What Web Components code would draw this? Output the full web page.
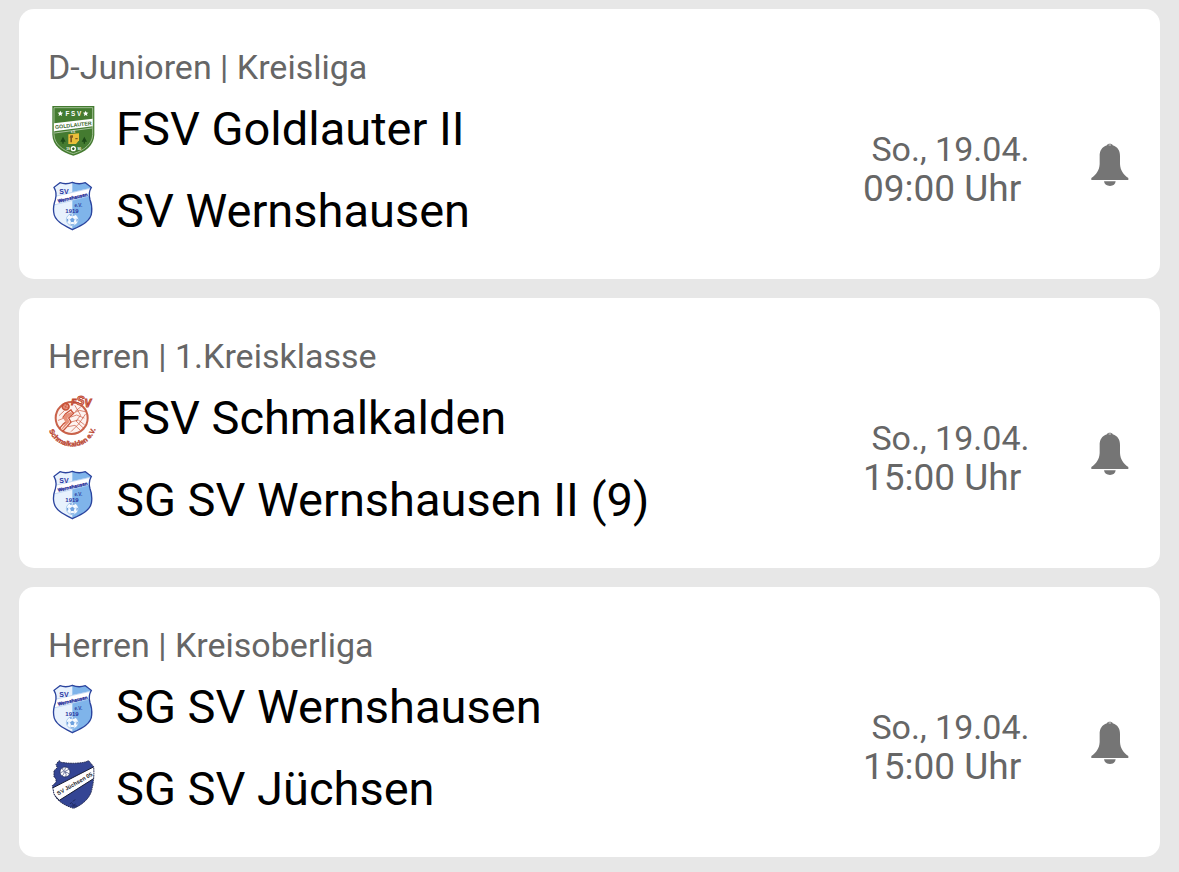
<!DOCTYPE html>
<html lang="de">
<head>
<meta charset="utf-8">
<meta name="viewport" content="width=device-width, initial-scale=1">
<title>Spiele</title>
<style>
    body {
        margin: 0;
        background: #e7e7e7;
        color: #000;
        font-family: Roboto, "Liberation Sans", sans-serif;
    }
</style>
</head>
<body>

<match-list>
    <match-card league="D-Junioren | Kreisliga" date="So., 19.04." time="09:00 Uhr">
        <club-crest slot="crest" club="goldlauter"></club-crest>
        <club-crest slot="crest" club="wernshausen"></club-crest>
        <span slot="home">FSV Goldlauter II</span>
        <span slot="away">SV Wernshausen</span>
    </match-card>
    <match-card league="Herren | 1.Kreisklasse" date="So., 19.04." time="15:00 Uhr">
        <club-crest slot="crest" club="schmalkalden"></club-crest>
        <club-crest slot="crest" club="wernshausen"></club-crest>
        <span slot="home">FSV Schmalkalden</span>
        <span slot="away">SG SV Wernshausen II (9)</span>
    </match-card>
    <match-card league="Herren | Kreisoberliga" date="So., 19.04." time="15:00 Uhr">
        <club-crest slot="crest" club="wernshausen"></club-crest>
        <club-crest slot="crest" club="juechsen"></club-crest>
        <span slot="home">SG SV Wernshausen</span>
        <span slot="away">SG SV Jüchsen</span>
    </match-card>
</match-list>

<script>
const CRESTS = {
    goldlauter: `
        <path d="M13 3H139V89C138 121 112 142 76 152C40 142 14 121 13 89Z" fill="#447b30"/>
        <path d="M18 8H134V89C133 117 109 136 76 146C43 136 19 117 18 89Z" fill="none" stroke="#c9dcc0" stroke-width="2"/>
        <path d="M37 17l2.400 5.500 6 .5-4.600 4 1.500 6-5.300-3.200-5.300 3.200 1.500-6-4.600-4 6-.5zM113 17l2.400 5.500 6 .5-4.600 4 1.500 6-5.300-3.200-5.300 3.200 1.500-6-4.600-4 6-.5z" fill="#fff"/>
        <text x="76" y="32" font-size="19" text-anchor="middle" fill="#fff">F S V</text>
        <path d="M18 55L134 41V64L18 79Z" fill="#fff"/>
        <text x="76" y="66" font-size="16" text-anchor="middle" fill="#41692f" transform="rotate(-6 76 60)">GOLDLAUTER</text>
        <path d="M20 84L132 69" stroke="#dbe7d4" stroke-width="2"/>
        <text x="76" y="84" font-size="8" text-anchor="middle" fill="#fff">e.V.</text>
        <path d="M61 88L93 85V106L84 117H61Z" fill="#eabf3b"/>
        <path d="M67 91h8v7h-3v14h-5v-14h-2zM82 99h7v4h-7z" fill="#805b20"/>
        <path d="M45 95l8 15h-6v6h-4v-6h-6zM109 95l8 15h-6v6h-4v-6h-6z" fill="#1c4b17"/>
        <circle cx="76" cy="131" r="8" fill="#fff"/>
        <path d="M76 127l4 3-2 5h-4l-2-5z" fill="#2f5d23"/>
        <text x="60" y="134" font-size="10" text-anchor="middle" fill="#fff">19</text>
        <text x="94" y="134" font-size="10" text-anchor="middle" fill="#fff">90</text>`,
    wernshausen: `
        <clipPath id="shield"><path d="M36 8Q54 15 73 7Q92 15 112 8L130 22Q120 39 126 59C132 73 132 83 131 96C130 123 101 136 73 149C47 136 19 123 17 96C15 83 17 73 22 59Q28 39 18 22Z"/></clipPath>
        <g clip-path="url(#shield)">
            <path d="M0 0H150V150H0Z" fill="#e8f2fd"/>
            <path d="M73 0H150V150H73Z" fill="#7fb4ea"/>
            <path d="M17 49L131 23V46L17 75Z" fill="#fff"/>
            <path d="M17 50L131 24M17 75L131 47" stroke="#a9c7ed" stroke-width="2"/>
        </g>
        <path d="M36 8Q54 15 73 7Q92 15 112 8L130 22Q120 39 126 59C132 73 132 83 131 96C130 123 101 136 73 149C47 136 19 123 17 96C15 83 17 73 22 59Q28 39 18 22Z" fill="none" stroke="#2b449e" stroke-width="4"/>
        <text x="48" y="41" font-size="21" text-anchor="middle" fill="#2935a0">SV</text>
        <text x="74" y="58" font-size="14" text-anchor="middle" fill="#2b359c" stroke="#2b359c" stroke-width="1" transform="rotate(-13 74 54)">Wernshausen</text>
        <text x="91" y="80" font-size="14" text-anchor="middle" fill="#3046a5">e.V.</text>
        <text x="72" y="98" font-size="18" text-anchor="middle" fill="#2935a0">1919</text>
        <circle cx="73" cy="119" r="18" fill="#f5faff" stroke="#8db8e7" stroke-width="2"/>
        <path d="M73 113l7 5-3 8H69l-3-8zM64 104l5-2 4 3 4-3 5 2-4 4-5-2-5 2zM56 118l4-2 1 6-2 5zM90 118l-4-2-1 6 2 5zM66 133h14l-4 3h-6z" fill="#6fa2df"/>
        <path d="M73 106v7M66 118l-6-2M80 118l6-2M69 126l-3 7M77 126l3 7" stroke="#8db8e7" stroke-width="1"/>`,
    schmalkalden: `
        <path id="ring" d="M-1 86A73 73 0 0 0 146 82" fill="none"/>
        <circle cx="71" cy="72" r="48" fill="#fdf3f0" stroke="#c9634b" stroke-width="6"/>
        <g fill="none" stroke="#c95238" stroke-linecap="round" stroke-linejoin="round">
            <circle cx="53" cy="38" r="10" stroke-width="5" fill="#e99783"/>
            <path d="M46 34l14 8M50 45l6-15" stroke-width="2"/>
            <path d="M69 47L53 59L45 70L58 80L45 91L34 104M68 48L77 58L62 72L69 84L57 98L45 111" stroke-width="4"/>
            <path d="M77 57L94 49L111 53M69 69L86 63L108 72M69 84L91 78L109 92M60 98L81 94L96 108" stroke-width="2"/>
            <path d="M81 35L98 64L84 81L108 104M101 36L82 52M112 61L93 89L70 112M34 64L48 51M31 79L46 73" stroke-width="2"/>
        </g>
        <path d="M53 61L69 54L74 58L58 72L65 83L47 103L38 109L53 86L45 71Z" fill="#e78f78"/>
        <text x="70" y="33" fill="#f3bdae" stroke="#c04a32" stroke-width="3" font-style="italic" font-size="25">F<tspan font-size="36">S</tspan><tspan font-size="30" dy="6">V</tspan></text>
        <text font-size="21" fill="#b9432e" stroke="#b9432e" stroke-width="1"><textPath href="#ring" startOffset="50%" text-anchor="middle">Schmalkalden e.V.</textPath></text>`,
    juechsen: `
        <clipPath id="coat"><path d="M33 8L40 13Q78 19 112 12L122 8L127 14L137 26Q140 64 130 101C121 126 99 142 77 151C51 143 28 130 18 108L13 83L24 73V62L18 57V38L28 29L24 20Z"/></clipPath>
        <g clip-path="url(#coat)">
            <path d="M0 0H150V155H0Z" fill="#344594"/>
            <path d="M4 95L146 22V56L34 127Z" fill="#fff" stroke="#161c35" stroke-width="3"/>
        </g>
        <path d="M33 8L40 13Q78 19 112 12L122 8L127 14L137 26Q140 64 130 101C121 126 99 142 77 151C51 143 28 130 18 108L13 83L24 73V62L18 57V38L28 29L24 20Z" fill="none" stroke="#252b50" stroke-width="3" stroke-dasharray="5 2"/>
        <circle cx="51" cy="42" r="15" fill="#fff" stroke="#1b2753" stroke-width="2"/>
        <path d="M51 42Q48 32 55 27M51 42Q42 39 37 45M51 42Q57 49 53 57M44 29Q43 36 48 40M63 34Q57 36 52 41M64 48Q59 43 52 43M42 54Q46 51 49 44" fill="none" stroke="#303d73" stroke-width="2"/>
        <text x="80" y="83" font-size="17" text-anchor="middle" fill="#17191f" transform="rotate(-30 80 77)">SV Jüchsen 05</text>
        <path d="M66 138q4-9 8 0t8-1M74 130l8-5M70 144h17" fill="none" stroke="#151d49" stroke-width="2"/>`
};

class ClubCrest extends HTMLElement {
    constructor() {
        super();
        this.attachShadow({ mode: 'open' });
    }

    connectedCallback() {
        this.shadowRoot.innerHTML = `
            <style>
                :host { display: block; }
                svg { display: block; width: 50px; height: 50px; overflow: visible; }
                text { font-family: "Liberation Sans", sans-serif; font-weight: 700; }
            </style>
            <svg viewBox="0 0 150 150" aria-hidden="true">${CRESTS[this.getAttribute('club')]}</svg>
        `;
    }
}

class ReminderButton extends HTMLElement {
    constructor() {
        super();
        this.attachShadow({ mode: 'open' });
    }

    connectedCallback() {
        this.shadowRoot.innerHTML = `
            <style>
                :host { display: block; }
                button {
                    display: block;
                    padding: 0;
                    border: 0;
                    background: none;
                    color: #757575;
                    cursor: pointer;
                }
                svg { display: block; width: 38px; height: 44px; }
            </style>
            <button type="button" aria-label="Erinnerung" aria-pressed="false">
                <svg viewBox="0 0 114 132" fill="currentColor" aria-hidden="true">
                    <path d="M48 7C49 1 64 1 65 7C81 12 87 24 87 40V63C88 82 97 95 112 105V111H1V105C16 95 25 82 26 63V40C26 24 32 12 48 7Z"/>
                    <path d="M39 115H74C73 124 67 129 57 129S40 124 39 115Z"/>
                    <path d="M53 6h7" stroke="#fff" stroke-width="2"/>
                </svg>
            </button>
        `;
        const button = this.shadowRoot.querySelector('button');
        button.addEventListener('click', () => {
            const on = button.getAttribute('aria-pressed') === 'true';
            button.setAttribute('aria-pressed', String(!on));
        });
    }
}

class MatchCard extends HTMLElement {
    constructor() {
        super();
        this.attachShadow({ mode: 'open' });
    }

    connectedCallback() {
        this.shadowRoot.innerHTML = `
            <style>
                :host {
                    display: block;
                    padding: 38px 31px 27px 29px;
                    border-radius: 15px;
                    background: #fff;
                }
                .league {
                    margin: 0;
                    color: #666;
                    font-size: 34px;
                    line-height: 41px;
                }
                .body { display: flex; align-items: center; }
                .crests {
                    display: flex;
                    flex-direction: column;
                    align-self: flex-start;
                    gap: 25px;
                    padding-top: 17px;
                    margin-right: 18px;
                }
                .teams {
                    flex: 1;
                    min-width: 0;
                    font-size: 47px;
                    line-height: 82px;
                }
                .teams div { white-space: nowrap; }
                .kickoff {
                    width: 228px;
                    padding-bottom: 2px;
                    color: #666;
                    font-size: 34px;
                    line-height: 40px;
                    white-space: pre;
                }
                .kickoff time { display: block; }
                .kickoff .clock { font-size: 37px; }
                reminder-button { padding-bottom: 10px; }
            </style>
            <p class="league">${this.getAttribute('league')}</p>
            <div class="body">
                <div class="crests"><slot name="crest"></slot></div>
                <div class="teams">
                    <div><slot name="home"></slot></div>
                    <div><slot name="away"></slot></div>
                </div>
                <div class="kickoff"><time> ${this.getAttribute('date')}</time><time class="clock">${this.getAttribute('time')}</time></div>
                <reminder-button></reminder-button>
            </div>
        `;
    }
}

class MatchList extends HTMLElement {
    constructor() {
        super();
        this.attachShadow({ mode: 'open' });
        this.shadowRoot.innerHTML = `
            <style>
                :host {
                    display: flex;
                    flex-direction: column;
                    gap: 19px;
                    padding: 9px 19px 15px;
                }
            </style>
            <slot></slot>
        `;
    }
}

customElements.define('club-crest', ClubCrest);
customElements.define('reminder-button', ReminderButton);
customElements.define('match-card', MatchCard);
customElements.define('match-list', MatchList);
</script>
</body>
</html>
